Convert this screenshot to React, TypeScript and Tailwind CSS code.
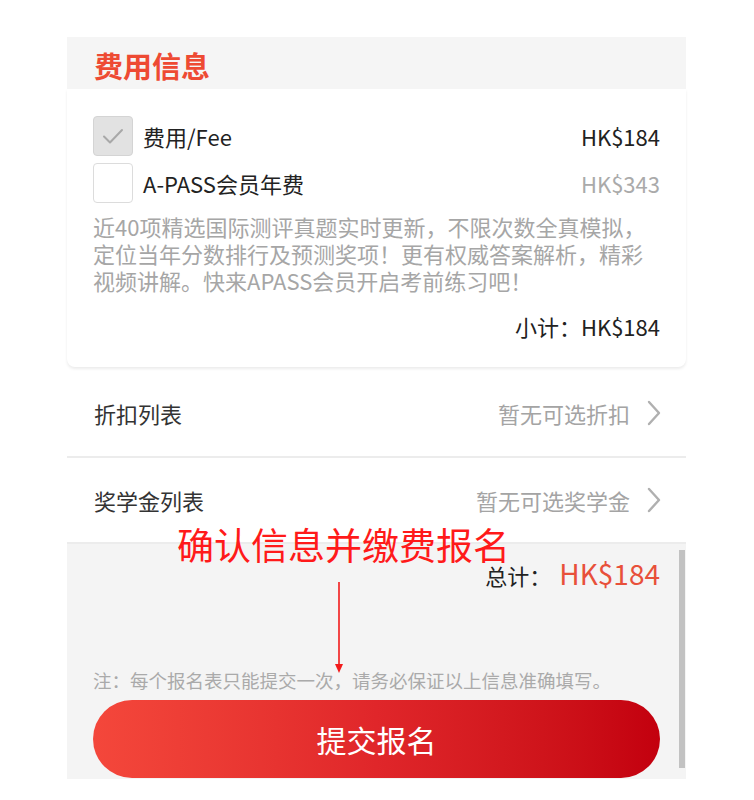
import React from "react";

const font = { fontFamily: '"Noto Sans CJK SC", "Noto Sans", sans-serif' };

function Check({ checked }: { checked: boolean }) {
  if (checked) {
    return (
      <div className="flex h-[40px] w-[40px] items-center justify-center rounded-[4px] border border-[#d4d4d4] bg-[#e2e2e2]">
        <svg width="24" height="24" viewBox="0 0 24 24" fill="none">
          <path d="M3 12.5l6 6L21 6" stroke="#a8a8a8" strokeWidth="2" strokeLinecap="round" strokeLinejoin="round" />
        </svg>
      </div>
    );
  }
  return <div className="h-[40px] w-[40px] rounded-[4px] border border-[#dcdcdc] bg-white" />;
}

function Chevron() {
  return (
    <svg width="16" height="26" viewBox="0 0 16 26" fill="none">
      <path d="M3 2l10 11L3 24" stroke="#b0b0b0" strokeWidth="2.4" strokeLinecap="round" strokeLinejoin="round" />
    </svg>
  );
}

function ListRow({ label, value, border }: { label: string; value: string; border?: boolean }) {
  return (
    <div className={`flex h-[86px] items-center justify-between pl-[27px] pr-[24px] ${border ? "border-t-2 border-[#ececec]" : ""}`}>
      <span className="text-[22px] text-[#333]">{label}</span>
      <div className="flex items-center gap-[16px]">
        <span className="text-[22px] text-[#a4a4a4]">{value}</span>
        <Chevron />
      </div>
    </div>
  );
}

export default function App() {
  return (
    <div className="min-h-[800px] bg-white pt-[37px]" style={font}>
      <div className="relative ml-[67px] w-[619px]">
        <div className="flex h-[52px] items-center bg-[#f5f5f5] pl-[27px] pt-[5px]">
          <span className="text-[29px] font-bold text-[#ee4a33]">费用信息</span>
        </div>

        <div className="rounded-b-[8px] bg-white pl-[26px] pr-[26px] pt-[27px] pb-[24px] shadow-[0_2px_3px_rgba(0,0,0,0.08)]">
          <div className="flex h-[40px] items-center">
            <Check checked />
            <span className="ml-[10px] flex-1 text-[22px] text-[#222]">费用/Fee</span>
            <span className="text-[22px] text-[#222]">HK$184</span>
          </div>
          <div className="mt-[7px] flex h-[40px] items-center">
            <Check checked={false} />
            <span className="ml-[10px] flex-1 text-[22px] text-[#222]">A-PASS会员年费</span>
            <span className="text-[22px] text-[#aaa]">HK$343</span>
          </div>
          <p className="mt-[10px] whitespace-nowrap text-[22px] leading-[27px] text-[#a6a6a6]">
            近40项精选国际测评真题实时更新，不限次数全真模拟，
            <br />
            定位当年分数排行及预测奖项！更有权威答案解析，精彩
            <br />
            视频讲解。快来APASS会员开启考前练习吧！
          </p>
          <div className="mt-[16px] text-right text-[22px] leading-[33px] text-[#222]">小计：HK$184</div>
        </div>

        <div className="mt-[3px]">
          <ListRow label="折扣列表" value="暂无可选折扣" />
          <ListRow label="奖学金列表" value="暂无可选奖学金" border />
        </div>

        <div className="relative h-[237px] border-t-2 border-[#ececec] bg-[#f4f4f4]">
          <div className="flex items-baseline justify-end pr-[26px] pt-[9px]">
            <span className="text-[22px] text-[#222]">总计：</span>
            <span className="ml-[8px] text-[28px] leading-[40px] text-[#e8503a]">HK$184</span>
          </div>
          <div className="mt-[73px] pl-[26px] text-[18.5px] leading-[28px] text-[#aaa]">
            注：每个报名表只能提交一次，请务必保证以上信息准确填写。
          </div>
          <div className="mt-[6px] ml-[26px] flex h-[78px] w-[567px] items-center justify-center rounded-full bg-gradient-to-r from-[#f4473b] via-[#e0262a] to-[#c3000e]">
            <span className="text-[30px] text-white">提交报名</span>
          </div>
          <div className="absolute right-[1px] top-[6px] h-[218px] w-[6px] bg-[#c2c2c2]" />
        </div>

        <div className="absolute left-[110px] top-[488px] text-[37px] leading-[38px] text-[#ff1a1a]">
          确认信息并缴费报名
        </div>
        <svg className="absolute left-[266px] top-[545px]" width="12" height="92" viewBox="0 0 12 92" fill="none">
          <line x1="6" y1="0" x2="6" y2="84" stroke="#f21b1b" strokeWidth="1.6" />
          <path d="M2 82l4 9 4-9z" fill="#f21b1b" />
        </svg>
      </div>
    </div>
  );
}
